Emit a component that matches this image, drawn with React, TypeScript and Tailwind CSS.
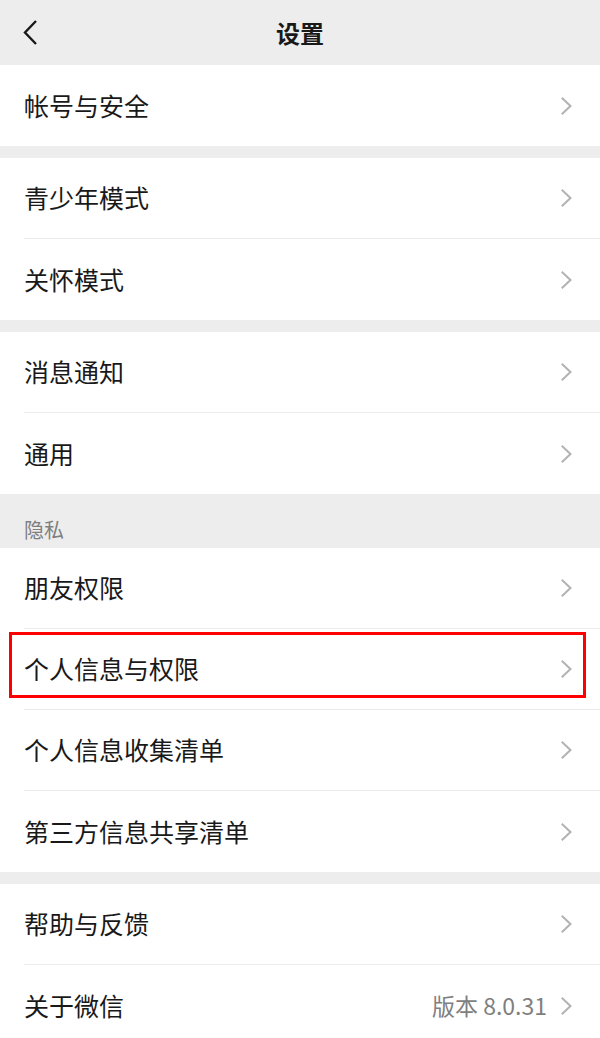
import React from 'react';

type Item = { label: string; value?: string; highlight?: boolean };

const sections: { title?: string; items: Item[] }[] = [
  { items: [{ label: '帐号与安全' }] },
  { items: [{ label: '青少年模式' }, { label: '关怀模式' }] },
  { items: [{ label: '消息通知' }, { label: '通用' }] },
  {
    title: '隐私',
    items: [
      { label: '朋友权限' },
      { label: '个人信息与权限', highlight: true },
      { label: '个人信息收集清单' },
      { label: '第三方信息共享清单' },
    ],
  },
  { items: [{ label: '帮助与反馈' }, { label: '关于微信', value: '版本 8.0.31' }] },
];

const Chevron = () => (
  <svg width="12" height="18" viewBox="0 0 12 18" fill="none" className="shrink-0">
    <path d="M1.5 1.5 L9.5 9 L1.5 16.5" stroke="#b2b2b2" strokeWidth="2" strokeLinecap="square" />
  </svg>
);

const Row = ({ item, last }: { item: Item; last: boolean }) => (
  <div className="relative h-[81px] bg-white pl-6">
    <div className={`flex h-full items-center pr-[27px] ${last ? '' : 'border-b border-[#ececec]'}`}>
      <span className="flex-1 text-[25px] text-[#191919]">{item.label}</span>
      {item.value && <span className="mr-[14px] text-[23px] text-[#7f7f7f]">{item.value}</span>}
      <Chevron />
    </div>
    {item.highlight && (
      <div className="pointer-events-none absolute left-[9px] right-[14px] top-[3px] h-[66px] border-[3px] border-[#ff0000]" />
    )}
  </div>
);

export default function App() {
  return (
    <div className="min-h-[1038px] w-[600px] bg-[#ededed] font-['Noto_Sans_CJK_SC','Noto_Sans',sans-serif]">
      <div className="relative flex h-[65px] items-center justify-center">
        <svg width="16" height="28" viewBox="0 0 16 28" fill="none" className="absolute left-[22px] top-[19px]">
          <path d="M14 2 L3 13.5 L14 25" stroke="#191919" strokeWidth="2.4" />
        </svg>
        <span className="text-[24px] font-semibold text-[#191919]">设置</span>
      </div>
      {sections.map((s, i) => (
        <div key={i} className={i > 0 && !s.title ? 'mt-3' : ''}>
          {s.title && (
            <div className="h-[54px] px-6 pt-[23px] text-[20px] leading-[26px] text-[#7f7f7f]">{s.title}</div>
          )}
          {s.items.map((it, j) => (
            <Row key={it.label} item={it} last={j === s.items.length - 1} />
          ))}
        </div>
      ))}
    </div>
  );
}
